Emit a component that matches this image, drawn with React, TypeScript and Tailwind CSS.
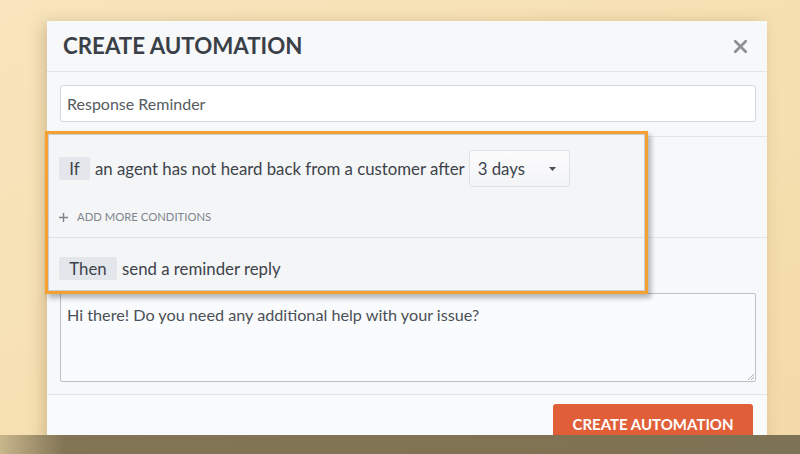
import React from 'react'
import { X } from 'lucide-react'

const font = { fontFamily: 'Lato, "Open Sans", sans-serif' }

function Chip({ label, width }: { label: string; width: string }) {
  return (
    <span className={`${width} h-[23px] flex items-center justify-center rounded-[2px] bg-[#e3e7eb] text-[16.8px] text-[#3d434a]`}>
      {label}
    </span>
  )
}

export default function App() {
  return (
    <div
      className="w-[800px] h-[454px] overflow-hidden flex flex-col bg-gradient-to-br from-[#f8e5bd] via-[#f6e0b2] to-[#f3daa8]"
      style={font}
    >
      {/* Stage */}
      <div className="h-[435px] pl-[47px] pt-[21px] overflow-hidden">
        <div className="w-[720px] bg-[#f7f8f9] shadow-[-4px_2px_14px_rgba(120,90,40,0.28)]">
          {/* Header */}
          <div className="h-[51px] flex items-center justify-between pl-[16px] pr-[16px] border-b border-[#e2e5e8]">
            <h1 className="text-[22.3px] font-bold text-[#3a4047]">CREATE AUTOMATION</h1>
            <X size={21} strokeWidth={3.2} className="text-[#8c9196]" />
          </div>

          {/* Name */}
          <div className="pt-[13px] pb-[9px] pl-[13px] pr-[11px]">
            <div className="h-[37px] flex items-center px-[6px] bg-white border border-[#d3d7db] rounded-[3px] text-[16px] text-[#555b61]">
              Response Reminder
            </div>
          </div>

          {/* Highlighted rule card + rest of sections behind */}
          <div className="flex -ml-[2px] -mb-[1px]">
            <div className="w-[603px] shrink-0 relative z-10 border-[3px] border-[#f5a033] shadow-[3px_4px_5px_rgba(0,0,0,0.28)]">
              <div className="border border-[#c9cdd2] bg-[#f4f5f6]">
                <div className="pl-[10px] pt-[15px] pb-[13px] border-b border-[#dde0e4]">
                  <div className="h-[37px] flex items-center gap-[5px] text-[16.8px] text-[#3d434a]">
                    <Chip label="If" width="w-[31px]" />
                    <span>an agent has not heard back from a customer after</span>
                    <div className="ml-[-1px] w-[101px] h-[37px] flex items-center justify-between pl-[8px] pr-[13px] rounded-[3px] border border-[#dfe2e5] bg-gradient-to-b from-[#fcfcfd] to-[#f3f4f6]">
                      <span className="text-[16.8px] text-[#3d434a]">3 days</span>
                      <svg width="7" height="4" viewBox="0 0 7 4" className="fill-[#4a5057]">
                        <path d="M0 0h7L3.5 4z" />
                      </svg>
                    </div>
                  </div>
                  <div className="mt-[23px] h-[14px] flex items-center gap-[9px] text-[11.3px] text-[#7d858e]">
                    <svg width="9" height="9" viewBox="0 0 9 9" className="stroke-[#7d858e]" strokeWidth="1.4">
                      <path d="M4.5 0v9M0 4.5h9" />
                    </svg>
                    <span>ADD MORE CONDITIONS</span>
                  </div>
                </div>
                <div className="pl-[10px] pt-[19px] pb-[10px] h-[52px] flex items-start gap-[5px] text-[16.8px] text-[#3d434a]">
                  <Chip label="Then" width="w-[58px]" />
                  <span className="h-[23px] flex items-center">send a reminder reply</span>
                </div>
              </div>
            </div>
            <div className="flex-1 flex flex-col">
              <div className="mt-[5px] h-[102px] border-t border-b border-[#e2e5e8]" />
            </div>
          </div>

          {/* Reply text */}
          <div className="pl-[13px] pr-[11px] pb-[12px]">
            <div className="relative h-[89px] border border-[#b9c2cb] bg-[#fafbfc] rounded-[2px] px-[6px] pt-[9px] text-[16.2px] text-[#4a5057]">
              Hi there! Do you need any additional help with your issue?
              <svg width="7" height="7" viewBox="0 0 7 7" className="absolute right-[1px] bottom-[1px] stroke-[#a9b0b7]" strokeWidth="1">
                <path d="M7 1L1 7M7 4L4 7" />
              </svg>
            </div>
          </div>

          {/* Footer */}
          <div className="border-t border-[#e2e5e8] bg-[#f9fafb] pt-[9px] pr-[14px] flex justify-end">
            <button className="w-[200px] h-[44px] rounded-[3px] bg-[#e05f39] text-white text-[15px] font-bold pb-[3px]">
              CREATE AUTOMATION
            </button>
          </div>
        </div>
      </div>

      {/* Bottom band */}
      <div className="h-[19px] bg-gradient-to-r from-[#c9b68c] via-[#827555] via-[8%] to-[#7e7254]" />
    </div>
  )
}
